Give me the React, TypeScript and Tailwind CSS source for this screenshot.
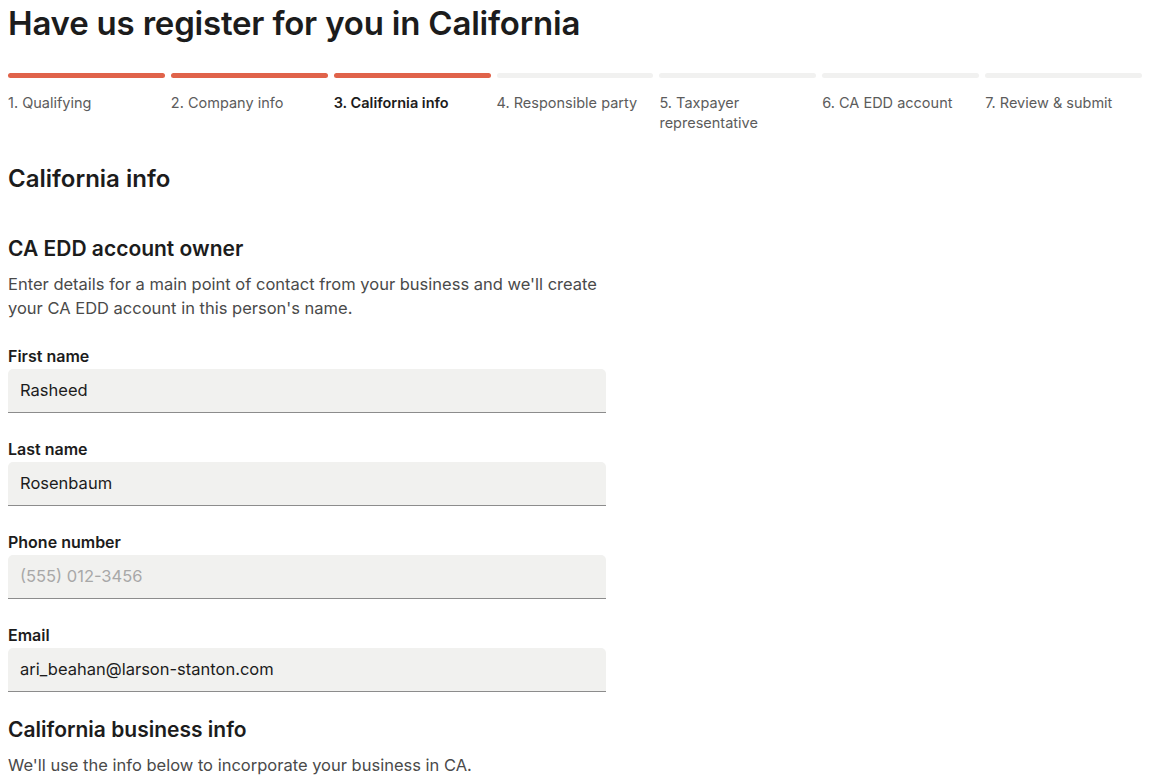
const steps = [
  { label: "1. Qualifying", done: true },
  { label: "2. Company info", done: true },
  { label: "3. California info", done: true, active: true },
  { label: "4. Responsible party", done: false },
  { label: "5. Taxpayer representative", done: false },
  { label: "6. CA EDD account", done: false },
  { label: "7. Review & submit", done: false },
];

type FieldProps = {
  label: string;
  value?: string;
  placeholder?: string;
};

function Field({ label, value, placeholder }: FieldProps) {
  return (
    <div className="flex flex-col">
      <label className="text-[16px] font-semibold leading-[22px] text-[#1c1c1c]">{label}</label>
      <div className="mt-[2px] h-[44px] rounded-t-[5px] border-b border-[#8c8c8c] bg-[#f1f1ef] px-3 flex items-center">
        {value ? (
          <span className="text-[16.5px] text-[#1c1c1c]">{value}</span>
        ) : (
          <span className="text-[16.5px] text-[#a8a8a8]">{placeholder}</span>
        )}
      </div>
    </div>
  );
}

export default function App() {
  return (
    <div className="min-h-screen bg-white pl-2 pr-[18px] font-['Inter',sans-serif] text-[#1c1c1c]">
      <h1 className="pt-[3px] text-[33px] font-semibold leading-[40px] tracking-[-0.2px]">
        Have us register for you in California
      </h1>

      <div className="mt-[30px] grid grid-cols-7 gap-[6px]">
        {steps.map((s) => (
          <div key={s.label} className="flex flex-col">
            <div className={`h-[5px] rounded-full ${s.done ? "bg-[#e0634a]" : "bg-[#f1f1f0]"}`} />
            <span
              className={`mt-[15px] text-[14.5px] leading-[20px] ${
                s.active ? "font-semibold text-[#1c1c1c]" : "text-[#5c5c5c]"
              }`}
            >
              {s.label}
            </span>
          </div>
        ))}
      </div>

      <div className="w-[598px]">
        <h2 className="mt-[31px] text-[24px] font-semibold leading-[30px]">California info</h2>

        <h3 className="mt-[41px] text-[21px] font-semibold leading-[28px]">CA EDD account owner</h3>
        <p className="mt-[9px] text-[16.5px] leading-[24px] text-[#4a4a4a]">
          Enter details for a main point of contact from your business and we'll create your CA EDD account in this
          person's name.
        </p>

        <div className="mt-[25px] flex flex-col gap-[25px]">
          <Field label="First name" value="Rasheed" />
          <Field label="Last name" value="Rosenbaum" />
          <Field label="Phone number" placeholder="(555) 012-3456" />
          <Field label="Email" value="ari_beahan@larson-stanton.com" />
        </div>

        <h3 className="mt-[24px] text-[21px] font-semibold leading-[28px]">California business info</h3>
        <p className="mt-[9px] text-[16.5px] leading-[24px] text-[#4a4a4a]">
          We'll use the info below to incorporate your business in CA.
        </p>
      </div>
    </div>
  );
}
